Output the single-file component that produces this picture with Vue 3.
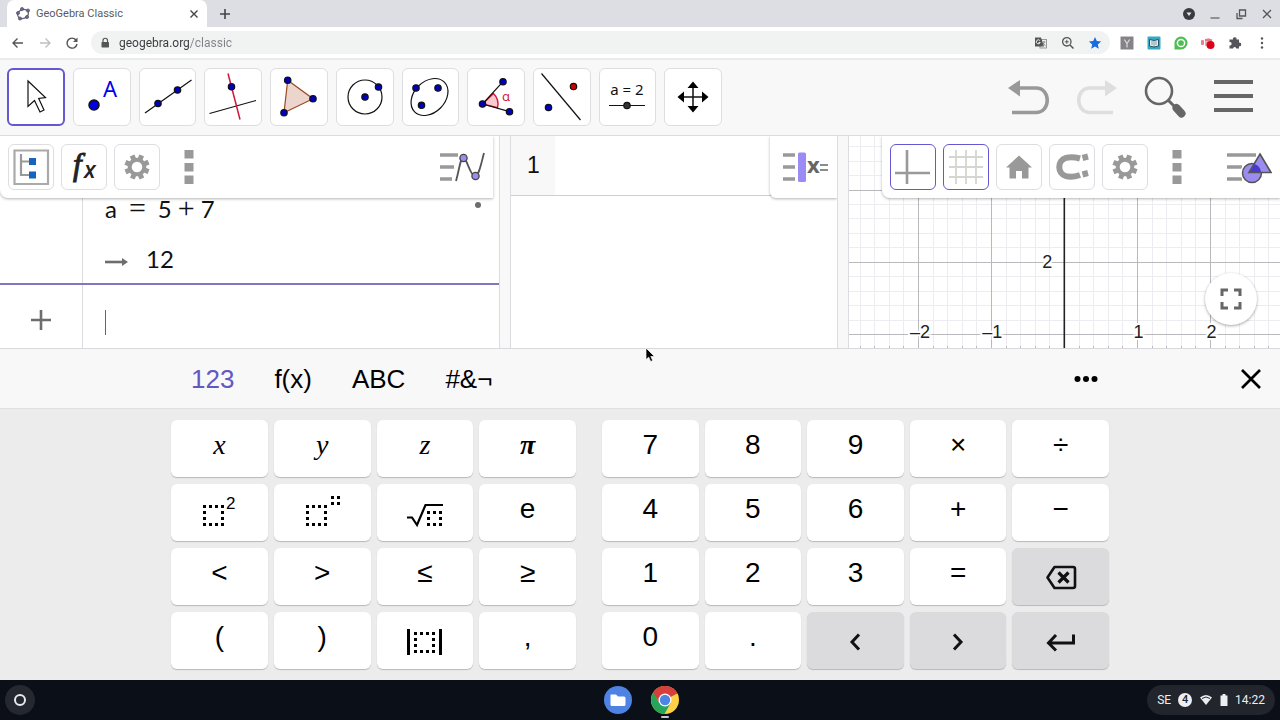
<script setup>
import { ref } from 'vue'

const square = (x, y) => `M${x} ${y}h3v3h-3z`
const dottedBox = (x, y, n) => {
  let d = ''
  for (let row = 0; row < n; row++) {
    for (let col = 0; col < n; col++) {
      const edge = row === 0 || col === 0 || row === n - 1 || col === n - 1
      if (edge) d += square(x + col * 6, y + row * 6)
    }
  }
  return d
}

const leftKeys = [
  { t: 'x', c: 'math' }, { t: 'y', c: 'math' }, { t: 'z', c: 'math' }, { t: 'π', c: 'math pi' },
  { icon: 'square', n: 'squared' }, { icon: 'power', n: 'power' }, { icon: 'root', n: 'square root' }, { t: 'e' },
  { t: '<' }, { t: '>' }, { t: '≤' }, { t: '≥' },
  { t: '(' }, { t: ')' }, { icon: 'abs', n: 'absolute value' }, { t: ',' },
]
const rightKeys = [
  { t: '7' }, { t: '8' }, { t: '9' }, { t: '×' }, { t: '÷' },
  { t: '4' }, { t: '5' }, { t: '6' }, { t: '+' }, { t: '−' },
  { t: '1' }, { t: '2' }, { t: '3' }, { t: '=' }, { icon: 'backspace', n: 'backspace', c: 'fn' },
  { t: '0' }, { t: '.' }, { icon: 'left', n: 'move left', c: 'fn' }, { icon: 'right', n: 'move right', c: 'fn' }, { icon: 'enter', n: 'enter', c: 'fn' },
]
const groups = [leftKeys, rightKeys]
const tools = ['Move', 'Point', 'Line', 'Perpendicular line', 'Polygon', 'Circle', 'Ellipse', 'Angle', 'Reflect', 'Slider', 'Move view']
const keyboardTabs = ['123', 'f(x)', 'ABC', '#&¬']
const activeTab = ref('123')
const address = ref('geogebra.org/classic')
const formula = ref('')

const steps = (origin, step, from, to) => {
  const out = []
  for (let i = from; i <= to; i++) out.push(origin + Math.round(i * step))
  return out
}
const minorX = steps(216, 14.6, -14, 60)
const minorY = steps(198, 14.45, -13, 1)
const majorX = steps(216, 73, -2, 12)
const majorY = [54, 126, 198]
const labels = [{ x: 72, t: '–2' }, { x: 144, t: '–1' }, { x: 290, t: '1' }, { x: 363, t: '2' }]
const teeth = [0, 45, 90, 135, 180, 225, 270, 315]
</script>

<template>
  <div class="screen">
    <header class="browser">
      <div class="tabstrip">
        <div class="tab">
          <svg class="i16" viewBox="0 0 16 16"><ellipse cx="8" cy="8" rx="5.5" ry="4.5" fill="none" stroke="#666" stroke-width="1.3" transform="rotate(-20 8 8)" /><g fill="#6a67a8" stroke="#444" stroke-width=".6"><circle cx="3" cy="7" r="1.6" /><circle cx="7" cy="3" r="1.6" /><circle cx="13" cy="4.500" r="1.600" /><circle cx="12" cy="11" r="1.6" /><circle cx="5" cy="12.500" r="1.600" /></g></svg>
          <span class="tab-title">GeoGebra Classic</span>
          <button class="bare" aria-label="Close tab"><svg class="i16" viewBox="0 0 16 16"><path d="M4.500 4.500l7 7M11.500 4.500l-7 7" stroke="#444" stroke-width="1.400" /></svg></button>
        </div>
        <button class="bare new-tab" aria-label="New tab"><svg class="i16" viewBox="0 0 16 16"><path d="M8 3v10M3 8h10" stroke="#444" stroke-width="1.600" /></svg></button>
        <div class="window-controls">
          <button class="bare" aria-label="Search tabs"><svg class="i16" viewBox="0 0 16 16"><circle cx="8" cy="8" r="6" fill="#3a3b40" /><path d="M5.500 6.500h5L8 10z" fill="#e6e7ea" /></svg></button>
          <button class="bare" aria-label="Minimize"><svg class="i16" viewBox="0 0 16 16"><path d="M3.500 12h9" stroke="#666" stroke-width="1.300" /></svg></button>
          <button class="bare" aria-label="Restore"><svg class="i16" viewBox="0 0 16 16"><path d="M6.500 4h6v6h-6zM4 7v5.500h5.500" fill="none" stroke="#555" stroke-width="1.300" /></svg></button>
          <button class="bare" aria-label="Close window"><svg class="i16" viewBox="0 0 16 16"><path d="M4 4l8 8M12 4l-8 8" stroke="#555" stroke-width="1.300" /></svg></button>
        </div>
      </div>
      <div class="navbar">
        <div class="nav-buttons">
          <button class="bare" aria-label="Back"><svg class="i16" viewBox="0 0 16 16"><path d="M13 8H3.500M7.500 3.500L3 8l4.500 4.500" fill="none" stroke="#555" stroke-width="1.400" /></svg></button>
          <button class="bare" aria-label="Forward"><svg class="i16" viewBox="0 0 16 16"><path d="M3 8h9.500M8.500 3.500L13 8l-4.500 4.500" fill="none" stroke="#c0c0c3" stroke-width="1.400" /></svg></button>
          <button class="bare" aria-label="Reload"><svg class="i16" viewBox="0 0 16 16"><path d="M12 5a5 5 0 1 0 1 4" fill="none" stroke="#555" stroke-width="1.400" /><path d="M13.500 2.500v4.500H9z" fill="#555" /></svg></button>
        </div>
        <div class="omnibox">
          <svg class="i16" viewBox="0 0 16 16"><rect x="4.500" y="7" width="7.500" height="5.500" rx=".7" fill="#555" /><path d="M6 7.500V5.500a2.250 2.250 0 0 1 4.500 0v2" fill="none" stroke="#555" stroke-width="1.200" /></svg>
          <input v-model="address" class="address" type="text" aria-label="Address" />
          <button class="bare" aria-label="Translate"><svg class="i16" viewBox="0 0 16 16"><rect x="7" y="4.500" width="6.500" height="8.500" fill="#eee" stroke="#999" /><path d="M2 2.500h6l3 9H2z" fill="#555" /><path d="M6.800 5.500a2 2 0 1 0 .4 2H5.500" fill="none" stroke="#eee" /><path d="M9.500 7h3M11 6v1c0 2-1 3-2 4M10 8l2.500 3" fill="none" stroke="#777" stroke-width=".7" /></svg></button>
          <button class="bare" aria-label="Zoom"><svg class="i16" viewBox="0 0 16 16"><circle cx="6.800" cy="6.800" r="4.200" fill="none" stroke="#555" stroke-width="1.300" /><path d="M10 10l3.500 3.500" stroke="#555" stroke-width="1.500" /><path d="M6.800 4.800v4M4.800 6.800h4" stroke="#555" /></svg></button>
          <button class="bare" aria-label="Bookmark"><svg class="i16" viewBox="0 0 16 16"><path d="M8 2l1.800 4.100 4.300.4-3.300 2.900 1 4.300L8 11.400l-3.800 2.300 1-4.300-3.300-2.900 4.300-.4z" fill="#1a6be0" /></svg></button>
        </div>
        <div class="extensions">
          <button class="bare" aria-label="Y extension"><svg class="i16" viewBox="0 0 16 16"><rect x="1.500" y="1.500" width="13" height="13" fill="#858387" /><path d="M5.300 4.500L8 8.500l2.700-4M8 8.500v4" fill="none" stroke="#ddd" stroke-width="1.200" /></svg></button>
          <button class="bare" aria-label="Reader"><svg class="i16" viewBox="0 0 16 16"><rect x="1.500" y="1.500" width="13" height="13" rx="1" fill="#35a9c4" /><path d="M3.500 4.500l4.500 1 4.500-1v6.500l-4.500 1-4.500-1z" fill="#e9f2f2" stroke="#245463" /><path d="M8 5.500v6M5 7h2M9 7h2M5 9h2M9 9h2" stroke="#477a84" stroke-width=".7" /></svg></button>
          <button class="bare" aria-label="Messages"><svg class="i16" viewBox="0 0 16 16"><path d="M1.500 14.500V8a6.500 6.500 0 1 1 6.500 6.500z" fill="#4cbd50" /><circle cx="8" cy="8" r="3.600" fill="#4cbd50" stroke="#fff" stroke-width="1.500" /></svg></button>
          <button class="bare" aria-label="Recorder"><svg class="i16" viewBox="0 0 16 16"><rect x="1" y="5" width="3" height="5" rx="1" fill="#ea7f8d" /><path d="M5 4l4-1 3 2v5l-7 1z" fill="#f3a7b0" /><path d="M5 5h7" stroke="#dc4c60" /><circle cx="10.500" cy="10" r="4" fill="#dc0018" /></svg></button>
          <button class="bare" aria-label="Extensions"><svg class="i16" viewBox="0 0 16 16"><path d="M2.500 4.500H6a1.800 1.800 0 1 1 3.500 0H12v3.200a1.800 1.800 0 1 1 0 3.500v2.300H9.300a1.600 1.600 0 1 0-3.200 0H2.500v-3a1.700 1.700 0 1 0 0-3.300z" fill="#55565a" /></svg></button>
          <button class="bare" aria-label="Browser menu"><svg class="i16" viewBox="0 0 16 16" fill="#555"><circle cx="8" cy="3.500" r="1.200" /><circle cx="8" cy="8" r="1.200" /><circle cx="8" cy="12.500" r="1.200" /></svg></button>
        </div>
      </div>
    </header>

    <nav class="toolbar" aria-label="Tools">
      <div class="tools">
        <button v-for="(tool, i) in tools" :key="tool" class="tool" :class="{ selected: i === 0 }" :aria-label="tool">
          <svg class="tool-icon" viewBox="0 0 58 58" fill="none" stroke="#111" stroke-width="1.200">
            <path v-if="i === 0" d="M21 13V38.500L27.500 32.500L33 44L37 42L31.700 30.500L38.500 29.500Z" fill="#fff" />
            <template v-else-if="i === 1">
              <circle cx="21" cy="37" r="5" fill="#00d" stroke-width="1.500" />
              <text class="glyph-a" x="30" y="29">A</text>
            </template>
            <template v-else-if="i === 2">
              <path d="M6 45L52.500 12" />
              <g fill="#00b"><circle cx="19" cy="35.500" r="3.200" /><circle cx="38.500" cy="22" r="3.200" /></g>
            </template>
            <template v-else-if="i === 3">
              <path d="M5.500 45.500L52 32.500" /><path d="M24 5.500L36 51.500" stroke="#d01838" stroke-width="1.500" />
              <circle cx="27.500" cy="18.700" r="3.200" fill="#00b" />
            </template>
            <template v-else-if="i === 4">
              <path d="M17.700 12.300L43 30.700L14 44.700Z" fill="#ebd5cc" stroke="#9a4a24" />
              <g fill="#00b"><circle cx="17.700" cy="12.300" r="3.200" /><circle cx="43" cy="30.700" r="3.200" /><circle cx="14" cy="44.700" r="3.200" /></g>
            </template>
            <template v-else-if="i === 5">
              <circle cx="29" cy="29" r="17" />
              <g fill="#00b"><circle cx="29" cy="29" r="3.200" /><circle cx="42.500" cy="19" r="3.200" /></g>
            </template>
            <template v-else-if="i === 6">
              <ellipse cx="28.500" cy="29" rx="21" ry="15.500" transform="rotate(-45 28.500 29)" />
              <g fill="#00b"><circle cx="15" cy="20" r="3.200" /><circle cx="37" cy="20" r="3.200" /><circle cx="20.500" cy="37.300" r="3.200" /></g>
            </template>
            <template v-else-if="i === 7">
              <path d="M15.500 36L26.500 25.500A15 15 0 0 1 30.500 39.700Z" fill="#f9c9d0" stroke="#d01838" stroke-width="1.400" />
              <path d="M36 13.700L15.500 36L42.500 43.700" />
              <g fill="#00b"><circle cx="15.500" cy="36" r="3.200" /><circle cx="36" cy="13.700" r="3.200" /><circle cx="42.500" cy="43.700" r="3.200" /></g>
              <text class="glyph-alpha" x="35" y="33">α</text>
            </template>
            <template v-else-if="i === 8">
              <path d="M8.500 5.500L47.500 52" />
              <circle cx="40.500" cy="18.500" r="3.200" fill="#c00" /><circle cx="15.500" cy="39.500" r="3.200" fill="#00b" />
            </template>
            <template v-else-if="i === 9">
              <text class="glyph-slider" x="29" y="27">a = 2</text>
              <path d="M11 37.500H47" /><circle cx="29" cy="37.500" r="3.200" fill="#333" />
            </template>
            <template v-else>
              <path d="M18 29H40M29 18V40" stroke-width="1.500" />
              <path d="M29 13.500L34.500 20h-11zM29 44.500L34.500 38h-11zM13.500 29L20 23.500v11zM44.500 29L38 23.500v11z" fill="#000" stroke="none" />
            </template>
          </svg>
        </button>
      </div>
      <div class="actions">
        <button class="bare" aria-label="Undo"><svg class="action" viewBox="0 0 48 44"><path d="M13 13H30C45 13 45 37.500 30 37.500H6" fill="none" stroke="#999" stroke-width="3.500" /><path d="M2 13L14 5V21.500Z" fill="#999" /></svg></button>
        <button class="bare" aria-label="Redo"><svg class="action" viewBox="0 0 48 44"><path d="M33 13H16C1 13 1 37.500 16 37.500H39" fill="none" stroke="#dedede" stroke-width="3.500" /><path d="M43 13L31 5V21.500Z" fill="#dedede" /></svg></button>
        <button class="bare" aria-label="Search"><svg class="action" viewBox="0 0 48 44"><circle cx="17" cy="16" r="13" fill="none" stroke="#666" stroke-width="2.600" /><path d="M26 25L33 32" stroke="#666" stroke-width="3" /><path d="M34.500 33L39.500 38.500" stroke="#666" stroke-width="8" stroke-linecap="round" /></svg></button>
        <button class="bare" aria-label="Menu"><svg class="action" viewBox="0 0 48 44"><path d="M4 7H43M4 21H43M4 35H43" stroke="#666" stroke-width="4.200" /></svg></button>
      </div>
    </nav>

    <main class="views">
      <section class="view algebra" aria-label="Algebra">
        <div class="row result">
          <div class="gutter"></div>
          <div class="expressions">
            <div class="expression"><span>a</span><span class="op equals">=</span><span>5</span><span class="op">+</span><span>7</span></div>
            <div class="expression answer">
              <svg class="arrow" viewBox="0 0 24 12"><path d="M0 6H20" stroke="#6d6d6d" stroke-width="2.600" /><path d="M17 2L23 6L17 10Z" fill="#6d6d6d" /></svg>
              <span>12</span>
            </div>
          </div>
          <span class="marker"></span>
        </div>
        <div class="row entry">
          <button class="gutter bare" aria-label="Add item"><svg class="plus" viewBox="0 0 22 22"><path d="M11 1V21M1 11H21" stroke="#6d6d6d" stroke-width="2.600" /></svg></button>
          <span class="caret"></span>
          <input v-model="formula" class="formula" type="text" aria-label="Input" />
        </div>
        <div class="stylebar algebra-bar">
          <button class="style-button" aria-label="Sort by"><svg viewBox="0 0 46 46" fill="none"><path d="M6.500 6.500H40V40H6.500z" stroke="#aaa" stroke-width="2.200" /><path d="M13 10V31H22M13 17.500H22" stroke="#999" stroke-width="2.200" /><path d="M21 14h7v7h-7zM21 27.500h7v7h-7z" fill="#1565c0" /></svg></button>
          <button class="style-button" aria-label="Auxiliary functions"><svg viewBox="0 0 46 46"><text class="glyph-f" x="12" y="31">f</text><text class="glyph-x" x="23" y="34">x</text></svg></button>
          <button class="style-button" aria-label="Settings"><svg viewBox="0 0 46 46"><circle cx="23" cy="23" r="7.300" fill="none" stroke="#999" stroke-width="4" /><rect v-for="a in teeth" :key="a" x="20.500" y="10.500" width="5" height="5.500" fill="#999" :transform="`rotate(${a + 22} 23 23)`" /></svg></button>
          <button class="bare more" aria-label="More"><svg viewBox="0 0 10 34" fill="#999"><path d="M.5 0h9v8.500h-9zM.5 13h9v8.500h-9zM.5 25.500h9V34h-9z" /></svg></button>
          <button class="bare view-menu" aria-label="Algebra view"><svg viewBox="0 0 46 34" fill="none"><path d="M1 5H19M1 17H15M1 29H13" stroke="#999" stroke-width="3.500" /><path d="M17 31C21 17 21 8 24.500 8C28 8 31 26 36 26C40 26 42 14 45 3" stroke="#555" stroke-width="1.800" /><g fill="#9b8cf0" stroke="#444" stroke-width="1.300"><circle cx="24.500" cy="8" r="3.600" /><circle cx="36.500" cy="26" r="3.600" /></g></svg></button>
        </div>
      </section>

      <section class="view cas" aria-label="CAS">
        <div class="cas-row"><span class="cas-number">1</span></div>
        <div class="stylebar cas-bar">
          <button class="bare view-menu" aria-label="CAS view"><svg viewBox="0 0 46 34"><path d="M1 5H13M1 17H13M1 29H13" stroke="#999" stroke-width="3.500" /><rect x="16" y="2.500" width="8" height="29.500" rx="1.500" fill="#9b8cf5" /><text class="glyph-cas" x="25" y="23">x</text><path d="M38 15h8M38 20h8" stroke="#666" stroke-width="1.600" /></svg></button>
        </div>
      </section>

      <section class="view graphics" aria-label="Graphics">
        <svg class="plot" viewBox="1 0 430 212" preserveAspectRatio="xMinYMin slice">
          <g stroke="#ededf1" shape-rendering="crispEdges">
            <path v-for="x in minorX" :key="'a' + x" :d="`M${x} 0V212`" />
            <path v-for="y in minorY" :key="'b' + y" :d="`M0 ${y}H1200`" />
          </g>
          <g stroke="#b9b9bc" shape-rendering="crispEdges">
            <path v-for="x in majorX" :key="'c' + x" :d="`M${x} 0V212`" />
            <path v-for="y in majorY" :key="'d' + y" :d="`M0 ${y}H1200`" />
            <path v-for="x in minorX" :key="'e' + x" :d="`M${x} 210V212`" />
          </g>
          <path d="M216 0V212" stroke="#222" stroke-width="1.600" />
          <g class="tick-labels">
            <text v-for="l in labels" :key="l.t" :x="l.x" y="202" text-anchor="middle">{{ l.t }}</text>
            <text x="204" y="132" text-anchor="end">2</text>
          </g>
        </svg>
        <div class="stylebar graphics-bar">
          <button class="style-button on" aria-label="Axes"><svg viewBox="0 0 46 46"><path d="M17 6V40M5 29H40" stroke="#999" stroke-width="2.600" /></svg></button>
          <button class="style-button on" aria-label="Grid"><svg viewBox="0 0 46 46"><path d="M13 6V40M23 6V40M33 6V40M6 13H40M6 23H40M6 33H40" stroke="#d6d6d0" stroke-width="1.800" /></svg></button>
          <button class="style-button" aria-label="Standard view"><svg viewBox="0 0 46 46"><path d="M23 11.500L36 23.500H32.500V34.500H26V27H20V34.500H13.500V23.500H10Z" fill="#999" /></svg></button>
          <button class="style-button" aria-label="Snap to grid"><svg viewBox="0 0 46 46" fill="none" stroke="#999" stroke-width="6"><path d="M31 14.500C24 12.500 20 13 17 13.800C8 16.500 8 29.500 17 32.200C20 33 24 33.500 31 31" /><path d="M33.500 14L39 12.500M33.500 30.500L39 29" /></svg></button>
          <button class="style-button" aria-label="Graphics settings"><svg viewBox="0 0 46 46"><circle cx="23" cy="23" r="7.300" fill="none" stroke="#999" stroke-width="4" /><rect v-for="a in teeth" :key="a" x="20.500" y="10.500" width="5" height="5.500" fill="#999" :transform="`rotate(${a + 22} 23 23)`" /></svg></button>
          <button class="bare more" aria-label="More graphics options"><svg viewBox="0 0 10 34" fill="#999"><path d="M.5 0h9v8.500h-9zM.5 13h9v8.500h-9zM.5 25.500h9V34h-9z" /></svg></button>
          <button class="bare view-menu" aria-label="Graphics view"><svg viewBox="0 0 46 34"><path d="M1 5H30M1 17H16M1 29H16" fill="none" stroke="#999" stroke-width="3.500" /><circle cx="26" cy="23" r="9.500" fill="#9b8cf0" stroke="#fff" stroke-width="4" /><path d="M34 4L45 22.500H23Z" stroke="#fff" stroke-width="4" /><circle cx="26" cy="23" r="9.500" fill="#9b8cf0" stroke="#555" stroke-width="1.500" /><path d="M34 4L45 22.500H23Z" fill="#9b8cf0" stroke="#555" stroke-width="1.600" /><path d="M28.500 14A9.500 9.500 0 0 1 35 22H24Z" fill="#4a3bd0" /></svg></button>
        </div>
        <button class="fullscreen" aria-label="Full screen"><svg viewBox="0 0 22 22" fill="none" stroke="#666" stroke-width="3"><path d="M2 8V2H8M14 2H20V8M20 14V20H14M8 20H2V14" /></svg></button>
      </section>
    </main>

    <section class="keyboard" aria-label="Virtual keyboard">
      <div class="keyboard-head">
        <div class="keyboard-tabs">
          <button v-for="t in keyboardTabs" :key="t" class="bare kb-tab" :class="{ active: t === activeTab }" @click="activeTab = t">{{ t }}</button>
          <button class="bare kb-more" aria-label="More symbols"><svg viewBox="0 0 28 24"><circle cx="5.500" cy="12" r="3" /><circle cx="14" cy="12" r="3" /><circle cx="22.500" cy="12" r="3" /></svg></button>
        </div>
        <button class="bare kb-close" aria-label="Close keyboard"><svg viewBox="0 0 24 24"><path d="M3 3L21 21M21 3L3 21" stroke="#000" stroke-width="2.700" /></svg></button>
        <svg class="pointer" viewBox="0 0 12 16"><path d="M1 1V12.500L3.700 10.200L5.700 14.500L7.700 13.500L5.800 9.500H9.500Z" fill="#000" stroke="#fff" stroke-width=".7" /></svg>
      </div>
      <div class="keys">
        <div v-for="(group, g) in groups" :key="g" class="key-group" :class="g === 0 ? 'four' : 'five'">
          <button v-for="(k, i) in group" :key="i" class="key" :class="k.c" :aria-label="k.n">
            <span v-if="k.t" class="label">{{ k.t }}</span>
            <svg v-else class="key-icon" :viewBox="k.c === 'fn' ? '0 4 60 40' : '0 1 60 40'">
              <template v-if="k.icon === 'square'"><path :d="dottedBox(14, 13, 4)" /><text class="glyph-sup" x="37" y="17">2</text></template>
              <template v-else-if="k.icon === 'power'"><path :d="dottedBox(14, 13, 4)" /><path :d="dottedBox(39, 4, 2)" /></template>
              <template v-else-if="k.icon === 'root'"><path :d="dottedBox(32, 19, 3)" /><path d="M12 25.500H17L22 33L30.500 13H48" fill="none" stroke="#000" stroke-width="2.200" /></template>
              <template v-else-if="k.icon === 'abs'"><path :d="dottedBox(19, 12, 4)" /><path d="M13.500 9V35M45.500 9V35" stroke="#000" stroke-width="3" /></template>
              <g v-else fill="none" stroke="#111" stroke-width="3">
                <template v-if="k.icon === 'backspace'"><path d="M23.500 14H42Q44 14 44 16V33Q44 35 42 35H23.500L16.500 24.500Z" stroke-linejoin="round" stroke-width="2.600" /><path d="M27.500 19.500L37.500 29.500M37.500 19.500L27.500 29.500" stroke-width="3.200" /></template>
                <path v-else-if="k.icon === 'left'" d="M34 17.500L27 25L34 32.500" />
                <path v-else-if="k.icon === 'right'" d="M26 17.500L33 25L26 32.500" />
                <path v-else d="M42.500 17.500V26H18M25 18L17.500 26L25 33.500" />
              </g>
            </svg>
          </button>
        </div>
      </div>
    </section>

    <footer class="shelf">
      <button class="launcher" aria-label="Launcher"><span class="ring"></span></button>
      <div class="apps">
        <button class="bare app" aria-label="Files"><svg viewBox="0 0 28 28"><circle cx="14" cy="14" r="14" fill="#4e83e4" /><path d="M7 8.500H12L14 10.500H20Q21.500 10.500 21.500 12V18.500Q21.500 20 20 20H8Q6.500 20 6.500 18.500V9Q6.500 8.500 7 8.500Z" fill="#fff" /></svg></button>
        <button class="bare app running" aria-label="Chrome"><svg viewBox="0 0 28 28"><circle cx="14" cy="14" r="14" fill="#fdd045" /><path d="M14 14L1.900 7A14 14 0 0 1 26.100 7.500Z" fill="#d5403d" /><path d="M14 7.500H26.300A14 14 0 0 0 1.900 7L8.500 17Z" fill="#d5403d" /><path d="M1.900 7A14 14 0 0 0 13.500 28L19.600 17.200L14 14L8.400 17.200L2.200 6.500Z" fill="#25a55a" /><circle cx="14" cy="14" r="6.500" fill="#fff" /><circle cx="14" cy="14" r="5.200" fill="#4d85e5" /></svg></button>
      </div>
      <button class="status">
        <span>SE</span><span class="badge">4</span>
        <svg class="wifi" viewBox="0 0 14 14"><path d="M1 4.500Q7 -.5 13 4.500L7 12Z" fill="#eceef2" /><path d="M3 5.500Q7 2.500 11 5.500" fill="none" stroke="#25282f" /></svg>
        <svg class="battery" viewBox="0 0 8 14"><path d="M2.500 1h3v1.500H7.500V13H.5V2.500h2z" fill="#eceef2" /></svg>
        <span>14:22</span>
      </button>
    </footer>
  </div>
</template>

<style>
html, body { margin: 0; }
</style>

<style scoped>
* { box-sizing: border-box; }
button, input { font: inherit; color: inherit; margin: 0; }
svg { display: block; flex: none; }
.screen { min-height: 100vh; display: flex; flex-direction: column; background: #f8f8f9; font-family: "Liberation Sans", Arial, sans-serif; color: #111; overflow: hidden; }
.bare { border: 0; padding: 0; background: none; display: flex; align-items: center; justify-content: center; }
.i16 { width: 16px; height: 16px; }

.browser { font-family: Roboto, sans-serif; border-bottom: 2px solid #e9ebed; }
.tabstrip { display: flex; align-items: flex-end; height: 27px; background: #dcdee4; }
.tab { display: flex; align-items: center; gap: 5px; width: 200px; height: 27px; margin-left: 7px; padding: 0 5px 0 8px; border-radius: 7px 7px 0 0; background: #fff; }
.tab-title { flex: 1; font-size: 11px; line-height: 16px; color: #5a5b5f; }
.new-tab { height: 27px; margin-left: 10px; }
.window-controls { display: flex; align-items: center; gap: 10px; height: 27px; margin-left: auto; padding-right: 5px; }
.navbar { display: flex; align-items: center; height: 31px; background: #fff; padding: 0 10px; }
.nav-buttons { display: flex; gap: 11px; margin-right: 11px; }
.omnibox { display: flex; align-items: center; flex: 1; height: 23px; gap: 11px; padding: 0 7px 0 6px; border-radius: 12px; background: #f1f3f3; }
.address { flex: 1; min-width: 0; margin-left: -5px; padding: 0; border: 0; outline: 0; font-size: 12px; line-height: 20px; background: linear-gradient(90deg, #38393c 71px, #808286 71px); background-clip: text; -webkit-background-clip: text; -webkit-text-fill-color: transparent; }
.extensions { display: flex; gap: 11px; margin-left: 9px; }

.toolbar { display: flex; justify-content: space-between; align-items: center; height: 76px; padding: 0 22px 2px 7px; border-bottom: 1px solid #dcdce0; background: #f8f8f9; }
.tools { display: grid; grid-template-columns: repeat(11, 1fr); gap: 8px; width: 715px; }
.tool { display: flex; align-items: center; justify-content: center; height: 58px; padding: 0; border: 1px solid #dedee2; border-radius: 6px; background: #fff; }
.tool.selected { border: 2px solid #6557d2; }
.tool-icon { width: 58px; height: 58px; margin: -2px; }
.glyph-a { font: 22px "Noto Sans", sans-serif; fill: #00e; stroke: none; }
.glyph-alpha { font: 13px "Noto Sans", sans-serif; fill: #d01838; stroke: none; }
.glyph-slider { font: 15px "Noto Sans", sans-serif; fill: #111; stroke: none; text-anchor: middle; }
.actions { display: flex; gap: 20px; }
.action { width: 48px; height: 44px; }

.views { display: flex; flex: 1; min-height: 212px; }
.view { position: relative; min-width: 0; overflow: hidden; background: #fff; }
.algebra { flex: 501; border-right: 1px solid #dcdce0; display: flex; flex-direction: column; }
.row { display: flex; position: relative; }
.gutter { flex: none; width: 83px; border-right: 1px solid #dcdce0; }
.result { flex: 1; }
.expressions { padding: 56px 0 0 22px; font-family: Lato, sans-serif; font-size: 24px; }
.expression { display: flex; align-items: baseline; height: 32px; line-height: 32px; }
.op { margin: 0 6px; font: 30px/32px "Liberation Serif", serif; }
.equals { margin: 0 12px; }
.answer { align-items: center; margin-top: 19px; gap: 17px; }
.arrow { width: 24px; height: 12px; margin-top: 6px; }
.marker { position: absolute; right: 18px; top: 66px; width: 6px; height: 6px; border-radius: 50%; background: #6d6d6d; }
.entry { align-items: center; height: 65px; border-top: 2px solid #8177bd; }
.entry .gutter { height: 63px; border-right: 1px solid #dcdce0; }
.plus { width: 22px; height: 22px; margin-top: 6px; }
.caret { width: 1px; height: 25px; margin: 12px 0 0 22px; background: #6557b5; }
.formula { flex: 1; min-width: 0; height: 40px; border: 0; outline: 0; padding: 0 4px; background: none; font-size: 24px; }
.stylebar { position: absolute; top: 0; display: flex; align-items: center; gap: 7px; height: 62px; background: #fff; box-shadow: 0 1px 3px rgba(0, 0, 0, .3); }
.algebra-bar { left: 0; right: 6px; padding: 0 8px; border-bottom-left-radius: 8px; }
.style-button { display: flex; flex: none; align-items: center; justify-content: center; width: 46px; height: 46px; padding: 0; border: 1px solid #dedee2; border-radius: 6px; background: #fff; }
.style-button.on { border-color: #6557d2; }
.style-button svg { width: 46px; height: 46px; }
.glyph-f { font: italic 31px "Liberation Serif", serif; fill: #222; stroke: #222; stroke-width: 1px; }
.glyph-x { font: italic 600 23px "Open Sans", "Noto Sans", sans-serif; fill: #222; }
.glyph-cas { font: bold 22px "Noto Sans", sans-serif; fill: #666; }
.more { margin-left: 17px; }
.more svg { width: 10px; height: 34px; }
.view-menu { margin-left: auto; }
.view-menu svg { width: 46px; height: 34px; }
.cas { flex: 327; margin: 0 10px; border: 1px solid #dcdce0; border-width: 0 1px; }
.cas-row { height: 60px; border-bottom: 1px solid #cfcfd2; }
.cas-number { display: flex; align-items: center; justify-content: center; width: 44px; height: 59px; background: #f8f8f9; font-size: 23px; }
.cas-bar { right: 0; width: 67px; padding: 0 9px; border-bottom-left-radius: 6px; }
.graphics { flex: 432; border-left: 1px solid #dcdce0; }
.plot { position: absolute; inset: 0; width: 100%; height: 100%; }
.tick-labels text { font: 18px "Liberation Sans", Arial, sans-serif; fill: #222; stroke: #fff; stroke-width: 4px; paint-order: stroke; }
.graphics-bar { right: 0; padding: 0 8px; width: 398px; border-bottom-left-radius: 8px; }
.fullscreen { position: absolute; right: 23px; bottom: 23px; display: flex; align-items: center; justify-content: center; width: 52px; height: 52px; border: 0; padding: 0; border-radius: 50%; background: #fff; box-shadow: 0 1px 3px rgba(0, 0, 0, .35); }
.fullscreen svg { width: 22px; height: 22px; }

.keyboard { border-top: 1px solid #d8d8dc; background: #ececed; }
.keyboard-head { position: relative; height: 60px; border-bottom: 1px solid #e0e0e3; background: #f8f8f9; }
.keyboard-tabs { display: flex; align-items: center; gap: 40px; max-width: 938px; height: 59px; margin: 0 auto; padding: 0 9px 0 20px; }
.kb-tab { font-size: 26px; line-height: 32px; color: #000; }
.kb-tab.active { color: #6557c2; }
.kb-more { margin-left: auto; }
.kb-more svg { width: 28px; height: 24px; }
.kb-close { position: absolute; top: 18px; right: 17px; }
.kb-close svg { width: 24px; height: 24px; }
.pointer { position: absolute; left: 645px; top: -2px; width: 12px; height: 16px; }
.keys { display: flex; gap: 26px; max-width: 938px; margin: 0 auto; padding: 11px 0; }
.key-group { display: grid; grid-auto-rows: 57px; gap: 7px 6px; }
.four { flex: 405; grid-template-columns: repeat(4, 1fr); }
.five { flex: 507; grid-template-columns: repeat(5, 1fr); }
.key { display: flex; align-items: center; justify-content: center; min-width: 0; padding: 0; border: 0; border-radius: 6px; background: #fff; box-shadow: 0 1px 1px rgba(0, 0, 0, .22); color: #000; font-size: 28px; line-height: 32px; }
.label { padding-bottom: 8px; }
.math { font: italic 28px/32px "Liberation Serif", serif; }
.pi { font-weight: bold; }
.fn { background: #dbdadc; }
.key-icon { width: 60px; height: 40px; }
.glyph-sup { font: 17px "Liberation Sans", Arial, sans-serif; }

.shelf { display: grid; grid-template-columns: 1fr auto 1fr; align-items: center; height: 40px; padding: 0 5px; background: #0b0f17; font-family: Roboto, sans-serif; }
.launcher { display: flex; align-items: center; justify-content: center; width: 30px; height: 30px; padding: 0; border: 0; border-radius: 50%; background: #252830; }
.ring { width: 12px; height: 12px; border: 2px solid #e8eaee; border-radius: 50%; }
.apps { display: flex; gap: 19px; padding-left: 2px; }
.app { position: relative; }
.app svg { width: 28px; height: 28px; }
.running::after { content: ""; position: absolute; left: 10px; bottom: -4px; width: 8px; height: 2px; border-radius: 1px; background: #c8cace; }
.status { justify-self: end; display: flex; align-items: center; gap: 7px; height: 30px; padding: 0 10px; border: 0; border-radius: 15px; background: #22252c; color: #eceef2; font-size: 12px; }
.badge { width: 14px; height: 14px; border-radius: 50%; background: #eceef2; color: #22252c; font-size: 11px; font-weight: 500; line-height: 14px; text-align: center; }
.wifi { width: 14px; height: 14px; }
.battery { width: 8px; height: 14px; }
</style>
